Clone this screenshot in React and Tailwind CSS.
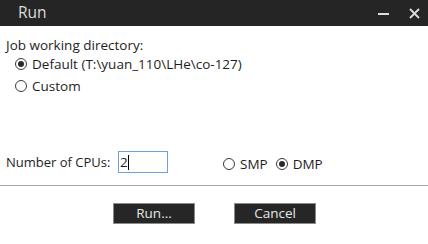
import React from "react";

function Radio({ checked, label }) {
  return (
    <label className="flex items-center gap-[5px]">
      <span className="w-[12px] h-[12px] rounded-full border border-[#3a3a3a] flex items-center justify-center">
        {checked && <span className="w-[6px] h-[6px] rounded-full bg-[#2a2a2a]" />}
      </span>
      <span>{label}</span>
    </label>
  );
}

export default function App() {
  return (
    <div
      className="w-[428px] h-[244px] bg-white text-[#1e1e1e] text-[13.5px] leading-[16px] flex flex-col overflow-hidden"
      style={{ fontFamily: '"Open Sans", "Noto Sans", sans-serif' }}
    >
      {/* title bar */}
      <div className="h-[26px] bg-[#252525] flex items-center justify-between shrink-0">
        <span className="pl-[18px] text-[15.5px] text-[#dcdcdc] leading-none -mt-[1px]">Run</span>
        <div className="flex items-center pr-[6px]">
          <span className="w-[11px] h-[2px] bg-[#dcdcdc] mt-[2px] mr-[20px]" />
          <svg width="11" height="11" viewBox="0 0 11 11" className="mr-[2px]">
            <path d="M1 1 L10 10 M10 1 L1 10" stroke="#dcdcdc" strokeWidth="1.8" />
          </svg>
        </div>
      </div>

      {/* body */}
      <div className="flex flex-col px-[6px] pt-[11px]">
        <div>Job working directory:</div>
        <div className="pl-[9px] flex flex-col gap-[6px] mt-[3px]">
          <Radio checked label={"Default (T:\\yuan_110\\LHe\\co-127)"} />
          <Radio label="Custom" />
        </div>
        <div className="flex items-center mt-[57px] h-[22px]">
          <span className="w-[112px] text-[13px]">Number of CPUs:</span>
          <div className="w-[50px] h-[22px] border border-[#6ea2dc] flex items-center pl-[1px]">
            <span>2</span>
            <span className="w-px h-[15px] bg-black" />
          </div>
          <div className="flex items-center gap-[8px] ml-[55px] mt-[4px]">
            <Radio label="SMP" />
            <Radio checked label="DMP" />
          </div>
        </div>
      </div>

      <div className="h-px bg-[#a8a8a8] mt-[12px] shrink-0" />

      <div className="flex justify-center gap-[39px] mt-[17px] pl-[1px]">
        <button className="w-[82px] h-[21px] bg-[#262626] border border-[#8a8a8a] text-[#e6e6e6] text-[13.5px] leading-none">
          Run...
        </button>
        <button className="w-[82px] h-[21px] bg-[#262626] border border-[#8a8a8a] text-[#e6e6e6] text-[13.5px] leading-none">
          Cancel
        </button>
      </div>
    </div>
  );
}
